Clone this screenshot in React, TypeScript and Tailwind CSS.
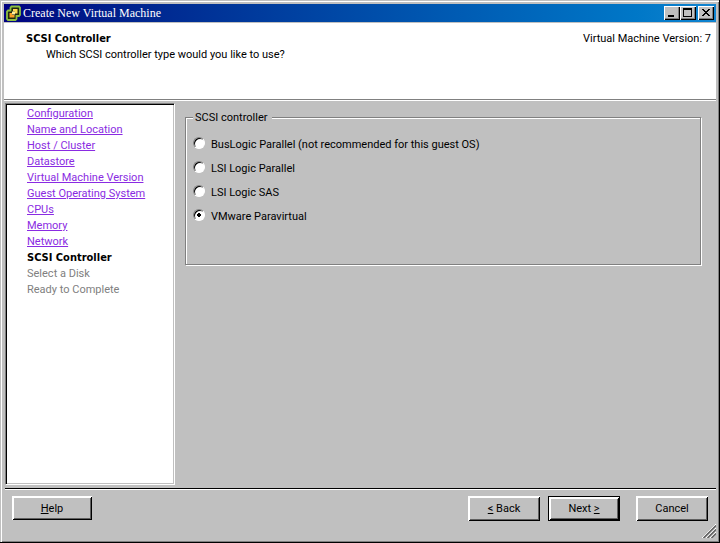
const steps = [
  'Configuration',
  'Name and Location',
  'Host / Cluster',
  'Datastore',
  'Virtual Machine Version',
  'Guest Operating System',
  'CPUs',
  'Memory',
  'Network',
  'SCSI Controller',
  'Select a Disk',
  'Ready to Complete',
]
const currentStep = 9

const controllers = [
  { id: 'buslogic', label: 'BusLogic Parallel (not recommended for this guest OS)' },
  { id: 'lsi-parallel', label: 'LSI Logic Parallel' },
  { id: 'lsi-sas', label: 'LSI Logic SAS' },
  { id: 'pvscsi', label: 'VMware Paravirtual' },
]

const strong = "font-['DejaVu_Sans_Condensed','DejaVu_Sans',sans-serif] font-bold"
const raised =
  'bg-[#c0c0c0] pt-[2px] shadow-[inset_1px_1px_0_#fff,inset_-1px_-1px_0_#000,inset_2px_2px_0_#fff,inset_-2px_-2px_0_#606060]'
const caption =
  'flex h-[14px] w-4 items-center justify-center bg-[#c0c0c0] shadow-[inset_1px_1px_0_#fff,inset_-1px_-1px_0_#000,inset_-2px_-2px_0_#808080]'

function AppIcon() {
  return (
    <svg className="h-4 w-4 shrink-0" viewBox="0 0 16 16" aria-hidden="true">
      <path
        d="M6.500 1.500H14l1 1V10l-1 1h-2.500v3l-1 1H3l-1-1V6.500l1-1h2.500v-3z"
        fill="#202810"
        stroke="#8cc040"
        strokeWidth="1.800"
      />
      <path d="M8 4h4.500v4.500H10V6.500H8z" fill="#ffd850" />
      <path d="M4.500 8H7v2h2.500v2.500h-5z" fill="#f8a028" />
      <path d="M7 6.500h3v3H7z" fill="#fff0a0" />
    </svg>
  )
}

function TitleBar() {
  return (
    <header className="flex h-[18px] items-center bg-linear-to-r from-[#000080] to-[#1084d0] pr-[2px] pl-[1px]">
      <AppIcon />
      <h1 className="ml-[2px] flex-1 font-['Liberation_Serif',serif] text-[12px] leading-4 text-white">
        Create New Virtual Machine
      </h1>
      <button type="button" aria-label="Minimize" className={caption}>
        <svg className="h-[14px] w-4" viewBox="0 0 16 14" shapeRendering="crispEdges">
          <path d="M4 9h6v2H4z" />
        </svg>
      </button>
      <button type="button" aria-label="Maximize" className={caption}>
        <svg className="h-[14px] w-4" viewBox="0 0 16 14" shapeRendering="crispEdges">
          <path d="M3 2h9v9H3zM4 4v6h7V4z" fillRule="evenodd" />
        </svg>
      </button>
      <button type="button" aria-label="Close" className={`ml-[2px] ${caption}`}>
        <svg className="h-[14px] w-4" viewBox="0 0 16 14" shapeRendering="crispEdges">
          <path d="M4 3h2v1h1v1h2V4h1V3h2v1h-1v1h-1v1H9v1h1v1h1v1h1v1h-2V9H9V8H7v1H6v1H4V9h1V8h1V7h1V6H6V5H5V4H4z" />
        </svg>
      </button>
    </header>
  )
}

function StepList() {
  return (
    <nav
      aria-label="Steps"
      className="w-[170px] shrink-0 border border-t-[#808080] border-r-white border-b-white border-l-[#808080] bg-white shadow-[inset_1px_1px_0_#000,inset_-1px_-1px_0_#c0c0c0]"
    >
      <ol className="pt-[2px] pl-[21px] leading-4">
        {steps.map((step, i) => (
          <li key={step} className="h-4">
            {i < currentStep && (
              <a href="#" className="text-[#8a2be2] underline">
                {step}
              </a>
            )}
            {i === currentStep && (
              <span aria-current="step" className={strong}>
                {step}
              </span>
            )}
            {i > currentStep && <span className="text-[#808080]">{step}</span>}
          </li>
        ))}
      </ol>
    </nav>
  )
}

function ControllerGroup() {
  return (
    <fieldset className="h-[157px] border border-[#808080] px-[7px] shadow-[1px_1px_0_#fff,inset_1px_1px_0_#fff]">
      <legend className="bg-[#c0c0c0] pt-[2px] pr-[5px] pl-[2px] leading-4">SCSI controller</legend>
      <div className="flex flex-col gap-[6px] pt-[9px]">
        {controllers.map(c => (
          <label key={c.id} className="flex items-start gap-[6px] leading-4">
            <input
              type="radio"
              name="controller"
              value={c.id}
              defaultChecked={c.id === 'pvscsi'}
              className="mt-[2px] h-3 w-3 appearance-none rounded-full border border-t-[#808080] border-r-white border-b-white border-l-[#808080] bg-white shadow-[inset_1px_1px_0_#000] checked:bg-[radial-gradient(circle,#000_2px,#fff_2px)]"
            />
            <span className="pt-[2px]">{c.label}</span>
          </label>
        ))}
      </div>
    </fieldset>
  )
}

export default function App() {
  return (
    <div className="flex min-h-screen flex-col border-r border-b border-black bg-[#c0c0c0] font-[Roboto,sans-serif] text-[11px] text-black">
      <div className="relative flex flex-1 flex-col border-t border-l border-[#c0c0c0] shadow-[inset_1px_1px_0_#fff,inset_-1px_-1px_0_#808080]">
        <div className="flex flex-1 flex-col p-[3px]">
          <TitleBar />

          <div className="mt-[1px] flex h-[78px] justify-between border-b border-white bg-white pt-2 pr-[5px] pl-[22px] leading-4 shadow-[inset_0_-1px_0_#808080]">
            <div>
              <h2 className={strong}>SCSI Controller</h2>
              <p className="pl-5">Which SCSI controller type would you like to use?</p>
            </div>
            <p>Virtual Machine Version: 7</p>
          </div>

          <main className="flex flex-1 pt-[2px] pl-[1px]">
            <StepList />
            <div className="flex-1 pt-[5px] pr-[15px] pl-[10px]">
              <ControllerGroup />
            </div>
          </main>

          <footer className="mt-[3px] ml-[1px] flex h-[51px] items-start border-t border-black pt-[7px] pr-2 pl-[7px] shadow-[inset_0_1px_0_#fff]">
            <button type="button" className={`h-6 w-20 ${raised}`}>
              <u>H</u>elp
            </button>
            <div className="flex-1" />
            <button type="button" className={`h-[25px] w-[72px] ${raised}`}>
              <u>&lt;</u> Back
            </button>
            <button type="button" className={`ml-2 h-[25px] w-[72px] border border-black ${raised}`}>
              Next <u>&gt;</u>
            </button>
            <button type="button" className={`ml-4 h-[25px] w-[72px] ${raised}`}>
              Cancel
            </button>
          </footer>
        </div>

        {/* resize grip */}
        <svg className="absolute right-[3px] bottom-1 h-[14px] w-[14px]" viewBox="0 0 14 14" aria-hidden="true">
          <path d="M0 14L14 0M4 14L14 4M8 14L14 8" stroke="#fff" />
          <path d="M1.500 14L14 1.500M5.500 14L14 5.500M9.500 14L14 9.500" stroke="#606060" strokeWidth="1.500" />
        </svg>
      </div>
    </div>
  )
}
